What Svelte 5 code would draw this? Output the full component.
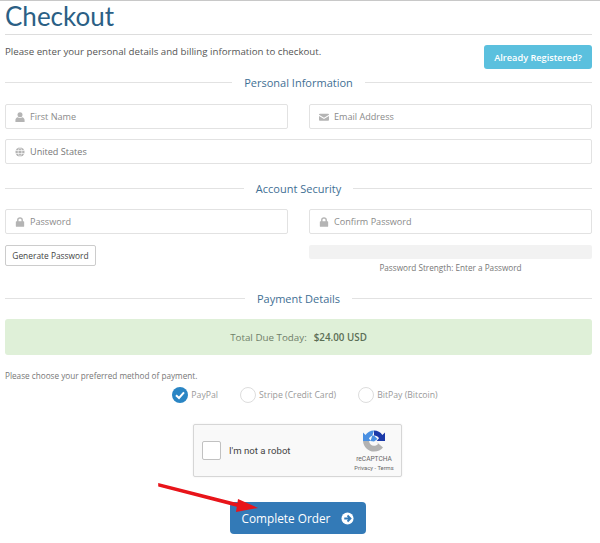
<script>
  const radios = [
    { label: 'PayPal', checked: true },
    { label: 'Stripe (Credit Card)', checked: false },
    { label: 'BitPay (Bitcoin)', checked: false }
  ];
</script>

{#snippet user()}
  <svg class="ico" viewBox="0 0 12 12"><circle cx="6" cy="3.2" r="3"/><path d="M0.5 12V9.6C0.5 7.8 2 6.8 3.2 6.4C4.8 7.4 7.2 7.4 8.8 6.4C10 6.8 11.5 7.8 11.5 9.6V12Z"/></svg>
{/snippet}
{#snippet mail()}
  <svg class="ico" viewBox="0 0 12 12"><path d="M1 2H11C11.5 2 12 2.4 12 3V3.4L6 7L0 3.4V3C0 2.4 0.5 2 1 2ZM0 4.8L6 8.4L12 4.8V9.6C12 10.2 11.5 10.6 11 10.6H1C0.5 10.6 0 10.2 0 9.6Z"/></svg>
{/snippet}
{#snippet lock()}
  <svg class="ico" viewBox="0 0 12 12"><path d="M2.5 5V3.6C2.5 1.6 4 0.3 6 0.3S9.5 1.6 9.5 3.6V5H10.2C10.7 5 11 5.3 11 5.8V11C11 11.5 10.7 11.8 10.2 11.8H1.8C1.3 11.8 1 11.5 1 11V5.8C1 5.3 1.3 5 1.8 5ZM4.2 5H7.8V3.6C7.8 2.6 7 2 6 2S4.2 2.6 4.2 3.6Z"/></svg>
{/snippet}
{#snippet globe()}
  <svg class="ico globe" viewBox="0 0 12 12"><circle cx="6" cy="6" r="5.5"/><path class="lines" d="M0.5 4.2H11.5M0.5 7.8H11.5M6 0.5C3 3.5 3 8.5 6 11.5M6 0.5C9 3.5 9 8.5 6 11.5"/></svg>
{/snippet}

<main class="page">
  <h1>Checkout</h1>

  <div class="intro">
    <p>Please enter your personal details and billing information to checkout.</p>
    <button class="registered">Already Registered?</button>
  </div>

  <div class="section first"><span>Personal Information</span></div>
  <div class="grid2 top">
    <div class="field">{@render user()}<span>First Name</span></div>
    <div class="field">{@render mail()}<span>Email Address</span></div>
    <div class="field wide">{@render globe()}<span class="dark">United States</span></div>
  </div>

  <div class="section security"><span>Account Security</span></div>
  <div class="grid2 loose">
    <div class="field">{@render lock()}<span>Password</span></div>
    <div class="field">{@render lock()}<span>Confirm Password</span></div>
    <div><button class="generate">Generate Password</button></div>
    <div>
      <div class="bar"></div>
      <p class="strength">Password Strength: Enter a Password</p>
    </div>
  </div>

  <div class="section payment"><span>Payment Details</span></div>
  <div class="total"><span>Total Due Today:</span> <b>$24.00 USD</b></div>

  <p class="choose">Please choose your preferred method of payment.</p>
  <div class="radios">
    {#each radios as r}
      <div class="radio">
        <span class="dot" class:on={r.checked}>
          {#if r.checked}
            <svg viewBox="0 0 16 16"><path d="M4 8.2L7 11L12 5.4" fill="none" stroke="#fff" stroke-width="2"/></svg>
          {/if}
        </span>
        <span>{r.label}</span>
      </div>
    {/each}
  </div>

  <div class="captcha">
    <span class="box"></span>
    <span class="robot">I'm not a robot</span>
    <div class="brand">
      <svg viewBox="0 0 22 22" class="logo">
        <path d="M11 0.5C14.5 0.5 17.6 2.2 19.4 5L22 2.6V11H13.6L16 8.2C15 6.6 13.2 5.6 11 5.6Z" fill="#1c3aa9"/>
        <path d="M11 0.5C7.4 0.5 4.2 2.3 2.5 5L0 2.6V11H8L5.9 8.4C7 6.7 8.9 5.6 11 5.6L14.5 9L11 11.5L7.5 11Z" fill="#4a90e2"/>
        <path d="M0 11H6C6.3 13.8 8.4 15.8 11 15.8C12.7 15.8 14.2 15 15.1 13.7L13 11.6L20 17.5C18 20 14.8 21.6 11 21.6C5.2 21.6 0.5 17 0 11Z" fill="#b2b2b2"/>
      </svg>
      <span class="re">reCAPTCHA</span>
      <span class="terms">Privacy - Terms</span>
    </div>
  </div>

  <button class="complete">
    Complete Order
    <svg viewBox="0 0 14 14"><circle cx="7" cy="7" r="6.5" fill="#fff"/><path d="M3.5 7H10M7 3.8L10.2 7L7 10.2" fill="none" stroke="#337ab7" stroke-width="2"/></svg>
  </button>

  <svg class="arrow" viewBox="0 0 110 45" aria-hidden="true">
    <path d="M4 5L4 7L86 28L87 26Z" fill="#e8141a" stroke="#e8141a" stroke-width="1.6"/>
    <path d="M83 20L103 29L81 33Z" fill="#e8141a"/>
  </svg>
</main>

<style>
  :global(body) {
    margin: 0;
    background: #fff;
  }
  .page {
    position: relative;
    box-sizing: border-box;
    width: 600px;
    height: 543px;
    padding: 0 8px 0 5px;
    border-top: 1px solid #c8c8c8;
    font-family: "Open Sans", "Liberation Sans", sans-serif;
    font-size: 10px;
    color: #666;
    overflow: hidden;
  }
  h1 {
    margin: 0;
    height: 33px;
    border-bottom: 1px solid #ddd;
    font-family: Lato, "Open Sans", sans-serif;
    font-weight: 400;
    font-size: 26px;
    line-height: 30px;
    color: #2b5f85;
  }
  .intro {
    display: flex;
    justify-content: space-between;
    align-items: flex-start;
    padding-top: 10px;
  }
  .intro p {
    margin: 0;
    font-size: 9.7px;
    line-height: 14px;
    color: #555;
  }
  .registered {
    width: 108px;
    height: 24px;
    padding: 0;
    border: 0;
    border-radius: 3px;
    background: #5bc0de;
    color: #fff;
    font: 600 9.2px "Open Sans", sans-serif;
  }
  .section {
    display: flex;
    align-items: center;
    gap: 12px;
    height: 16px;
    font-size: 11px;
    color: #3f6f94;
  }
  .section::before,
  .section::after {
    content: "";
    flex: 1;
    height: 1px;
    background: #e2e2e2;
  }
  .section.first { margin-top: 5px; }
  .section.security { margin-top: 16px; }
  .section.payment { margin-top: 16px; }
  .grid2 {
    display: grid;
    grid-template-columns: 283px 283px;
    column-gap: 21px;
    row-gap: 10px;
    margin-top: 13px;
  }
  .grid2.top { margin-top: 14px; }
  .grid2.loose { row-gap: 11px; }
  .field {
    display: flex;
    align-items: center;
    gap: 5px;
    box-sizing: border-box;
    height: 25px;
    padding-left: 9px;
    border: 1px solid #e2e2e2;
    border-radius: 2px;
    color: #8a8a8a;
    font-size: 9.1px;
  }
  .wide { grid-column: 1 / -1; }
  .dark { color: #777; }
  .ico {
    width: 10px;
    height: 10px;
    fill: #b4b4b4;
    flex: none;
  }
  .lines { fill: none; stroke: #fff; stroke-width: 0.8; }
  .generate {
    display: block;
    box-sizing: border-box;
    width: 91px;
    height: 21px;
    padding: 0;
    border: 1px solid #ccc;
    border-radius: 2px;
    background: #fff;
    color: #444;
    font: 400 8.4px "Open Sans", sans-serif;
  }
  .bar {
    height: 14px;
    border-radius: 2px;
    background: #f2f2f2;
  }
  .strength {
    margin: 3px 0 0;
    text-align: center;
    font-size: 8.2px;
    line-height: 12px;
    color: #777;
  }
  .total {
    display: flex;
    align-items: center;
    justify-content: center;
    gap: 7px;
    height: 36px;
    margin-top: 13px;
    border-radius: 3px;
    background: #dff0d8;
    color: #6f7f69;
    font-size: 9.8px;
  }
  .total b {
    font-weight: 600;
    color: #5b6e55;
  }
  .choose {
    margin: 15px 0 0;
    font-size: 8.2px;
    line-height: 12px;
    color: #777;
  }
  .radios {
    display: flex;
    justify-content: center;
    gap: 22px;
    margin-top: 5px;
    height: 16px;
    padding-left: 13px;
    color: #999;
    font-size: 8.7px;
  }
  .radio {
    display: flex;
    align-items: center;
    gap: 3px;
    line-height: 13px;
  }
  .dot {
    box-sizing: border-box;
    width: 16px;
    height: 16px;
    border: 1px solid #ddd;
    border-radius: 50%;
    background: #fff;
  }
  .dot.on {
    border: 0;
    background: #2a85c4;
  }
  .dot svg { display: block; }
  .captcha {
    display: flex;
    align-items: center;
    box-sizing: border-box;
    width: 209px;
    height: 53px;
    margin: 21px 0 0 188px;
    padding-left: 8px;
    border: 1px solid #d6d6d6;
    border-radius: 2px;
    background: #f9f9f9;
    box-shadow: 0 0 2px rgba(0, 0, 0, 0.08);
    font-family: Roboto, sans-serif;
  }
  .box {
    box-sizing: border-box;
    width: 19px;
    height: 19px;
    border: 1px solid #c1c1c1;
    border-radius: 2px;
    background: #fff;
  }
  .robot {
    margin-left: 8px;
    font-size: 9.6px;
    color: #444;
    flex: 1;
  }
  .brand {
    display: flex;
    flex-direction: column;
    align-items: center;
    width: 44px;
    margin-right: 5px;
    color: #666;
  }
  .logo {
    width: 22px;
    height: 22px;
    margin-bottom: 3px;
  }
  .re { font-size: 6.6px; line-height: 9px; }
  .terms { font-size: 5.8px; line-height: 8px; }
  .complete {
    display: flex;
    align-items: center;
    justify-content: center;
    gap: 11px;
    box-sizing: border-box;
    width: 136px;
    height: 32px;
    margin: 25px 0 0 225px;
    padding: 0;
    border: 0;
    border-radius: 4px;
    background: #337ab7;
    color: #fff;
    font: 400 11.8px "Open Sans", sans-serif;
  }
  .complete svg {
    width: 13px;
    height: 13px;
  }
  .arrow {
    position: absolute;
    left: 155px;
    top: 478px;
    width: 110px;
    height: 45px;
  }
</style>
